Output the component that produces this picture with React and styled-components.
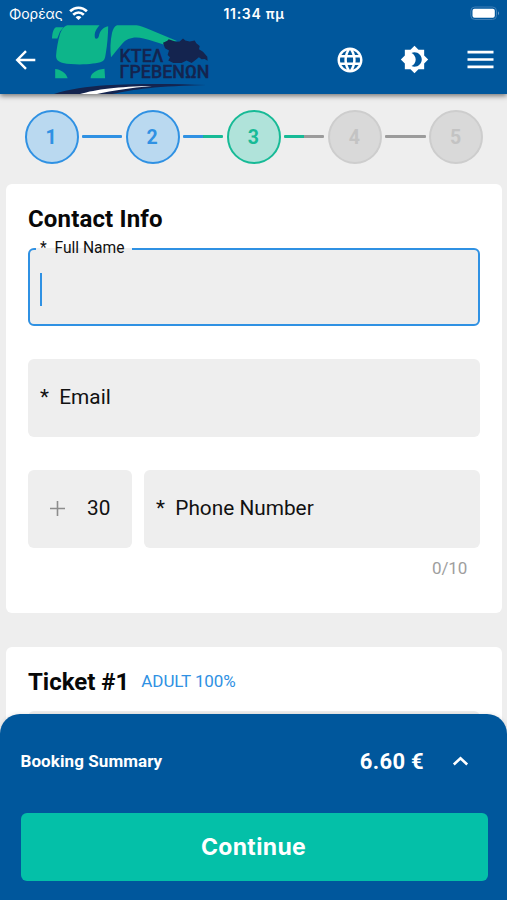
import React from 'react';
import styled, { createGlobalStyle } from 'styled-components';
import { MdLanguage, MdBrightness4 } from 'react-icons/md';

const GlobalStyle = createGlobalStyle`
  * { box-sizing: border-box; }
  body { margin: 0; background: #eeeeee; }
`;

const BLUE = '#00579c';
const ACCENT = '#2f91e3';
const GREEN = '#17ba96';

const Screen = styled.div`
  position: relative;
  display: flex;
  flex-direction: column;
  width: 507px;
  height: 900px;
  overflow: hidden;
  background: #eeeeee;
  color: #111;
  font-family: Roboto, sans-serif;
`;

const Header = styled.header`
  flex: none;
  height: 94px;
  background: ${BLUE};
  color: #fff;
  box-shadow: 0 2px 5px rgba(0, 0, 0, 0.5);
  z-index: 1;
`;

const StatusBar = styled.div`
  display: grid;
  grid-template-columns: 1fr auto 1fr;
  align-items: center;
  height: 25px;
  padding: 2px 7px 0 9px;
  font: 500 13.5px/20px Inter, 'Noto Sans', sans-serif;
`;

const Carrier = styled.div`
  display: flex;
  align-items: center;
  gap: 6px;
  font-weight: 400;
  font-size: 14px;
  letter-spacing: -0.05px;
`;

const Clock = styled.div`
  margin-right: 1px;
  font-weight: 600;
  font-size: 14px;
  letter-spacing: 0.7px;
`;

const BatterySlot = styled.div`
  display: flex;
  justify-content: flex-end;
`;

const NavBar = styled.nav`
  display: flex;
  align-items: flex-start;
  height: 69px;
  padding-left: 15px;
`;

const IconButton = styled.button`
  display: grid;
  place-items: center;
  width: ${(p) => p.$w}px;
  height: 69px;
  padding: 0;
  border: 0;
  background: none;
  color: #fff;
`;

const Logo = styled.svg`
  display: block;
  margin-left: 14px;
`;

const NavActions = styled.div`
  display: flex;
  margin-left: auto;
  padding-right: 11px;
  gap: 26px;
`;

const MenuSlot = styled.div`
  margin-left: 5px;
`;

const Steps = styled.div`
  display: flex;
  align-items: center;
  gap: 3.5px;
  flex: none;
  height: 90px;
  padding: 0 24px 5px 24.5px;
`;

const tones = {
  done: [ACCENT, '#bad9f0'],
  current: [GREEN, '#b0e3da'],
  idle: ['#cdcdcd', '#d9d9d9'],
};

const Step = styled.div`
  display: grid;
  place-items: center;
  flex: none;
  width: 54px;
  height: 54px;
  padding: 1px 1px 0 0;
  border: 2px solid ${(p) => tones[p.$tone][0]};
  border-radius: 50%;
  background: ${(p) => tones[p.$tone][1]};
  color: ${(p) => (p.$tone === 'idle' ? '#c3c3c3' : tones[p.$tone][0])};
  font-size: 19.5px;
  font-weight: 700;
`;

const Connector = styled.div`
  flex: 1;
  height: 2.6px;
  border-radius: 1px;
  background: linear-gradient(90deg, ${(p) => p.$from} 50%, ${(p) => p.$to} 50%);
`;

const Card = styled.section`
  flex: none;
  width: 496px;
  height: ${(p) => p.$h}px;
  margin: 0 0 34px 6px;
  padding: 20px 22px 0;
  border-radius: 6px;
  background: #fff;
`;

const Title = styled.h2`
  margin: 0;
  color: #080808;
  font-size: 24px;
  font-weight: 700;
  line-height: 30px;
  letter-spacing: ${(p) => p.$ls || 0}px;
`;

const ActiveField = styled.fieldset`
  height: 86px;
  margin: 6px 0 33px;
  padding: 0 0 0 9.5px;
  border: 2.5px solid ${ACCENT};
  border-radius: 6px;
  background: #eeeeee;
`;

const Legend = styled.legend`
  margin-left: -3.5px;
  padding: 0 7px 2px 4px;
  font-size: 15.6px;
  line-height: 16px;
  white-space: pre;
`;

const Caret = styled.div`
  width: 2.5px;
  height: 33px;
  margin-top: 14.5px;
  background: ${ACCENT};
`;

const Field = styled.div`
  display: flex;
  align-items: center;
  flex: ${(p) => (p.$w ? 'none' : 1)};
  width: ${(p) => (p.$w ? `${p.$w}px` : 'auto')};
  height: 78px;
  padding: 0 0 3px 12px;
  border-radius: 6px;
  background: #eeeeee;
  font-size: 20.8px;
  white-space: pre;
`;

const PhoneRow = styled.div`
  display: flex;
  gap: 12.5px;
  margin-top: 33px;
`;

const Prefix = styled.span`
  display: flex;
  margin: 2px 22px 0 10px;
`;

const Counter = styled.div`
  padding: 9px 13px 0 0;
  color: #9e9e9e;
  font-size: 17px;
  line-height: 22px;
  letter-spacing: -0.2px;
  text-align: right;
`;

const TicketHead = styled.div`
  display: flex;
  align-items: center;
  gap: 12px;
  margin-bottom: 14px;
`;

const Fare = styled.span`
  margin-top: -2px;
  color: ${ACCENT};
  font-size: 17px;
  letter-spacing: -0.1px;
`;

const Sheet = styled.footer`
  position: absolute;
  inset: 714px 0 0;
  padding: 27px 20px 0 20.5px;
  border-radius: 20px 20px 0 0;
  background: ${BLUE};
  box-shadow: 0 0 4px rgba(0, 0, 0, 0.12);
  color: #fff;
`;

const Summary = styled.div`
  display: flex;
  align-items: center;
  height: 40px;
  padding-right: 18px;
`;

const SummaryLabel = styled.span`
  font-size: 17px;
  font-weight: 700;
  letter-spacing: 0.08px;
`;

const Price = styled.span`
  margin: 1px 28px 0 auto;
  font-size: 22px;
  font-weight: 700;
  letter-spacing: 0.3px;
`;

const Continue = styled.button`
  display: block;
  width: 467px;
  height: 67.5px;
  margin-top: 32px;
  padding: 1px 1px 0 0;
  border: 0;
  border-radius: 6px;
  background: #04c0a8;
  color: #fff;
  font: 700 23px/1 Inter, sans-serif;
  letter-spacing: 0.35px;
`;

function WifiIcon() {
  return (
    <svg width="19" height="15" viewBox="0 0 19 15" fill="none" stroke="#fff" strokeWidth="2.7">
      <path d="M1.1 5.2C6 .6 13 .6 17.9 5.2" />
      <path d="M4.2 8.7C7.3 5.8 11.7 5.8 14.8 8.7" />
      <path d="M9.5 14 6.6 11.2C8.3 9.7 10.7 9.7 12.4 11.2Z" fill="#fff" stroke="none" />
    </svg>
  );
}

function BatteryIcon() {
  return (
    <svg width="30" height="15" viewBox="0 0 30 15">
      <rect x=".8" y="1" width="25.7" height="12.5" rx="4" fill="none" stroke="#3f7fb6" />
      <rect x="2.5" y="2.7" width="22.3" height="9.1" rx="2" fill="#fff" />
      <path d="M28 5.2q2 2 0 4z" fill="#6f9fc9" />
    </svg>
  );
}

function CompanyLogo() {
  return (
    <Logo width="162" height="69" viewBox="50 25 162 69">
      <g fill="#0db58a">
        <path d="M56 27.3h7.5l-3.5 4.2-2.7 7H52c.2-3 .7-9.5 4-11.2z" />
        <path d="M67.5 25.2h32c-2 2.500-4.700 6-4.800 9.300-.1 3 .4 4.300 1.500 4.200 1.500-.1 2.400-1 2.700-2.700.9-5 4-8.600 9.300-9.700-.2 9-.8 18-2.400 27-.7 4.500-1 7-3.800 8.300-4 1.900-13 2.800-22.300 2.800-6 0-12-.3-16.700-1.400-5-1.300-7.200-3.500-6.900-7.700.4-6 1.800-14 3.700-20.500 1.500-5 3.700-8.600 7.700-9.600z" />
        <path d="M117 25.200h19.500c3.500.3 8 2 13 4.200 9 3.800 18.500 7.600 27.500 11.600L163.500 44.500c-7.500-2.500-13-4.200-20-6-9-2.200-16.500-.5-21.500 5.500-4.500 5-7.500 9.500-11 13.200-1-8-.7-16 1-24.200 1-4 2.500-6.800 5-7.800z" />
        <path d="M55.200 68.900c5 .4 11 3.800 12.500 9.400H55.200z" />
        <path d="M104.500 68.800l.6 9.500H90.600c-.2-5 6-8.700 13.900-9.500z" />
      </g>
      <path
        fill="#14244f"
        d="M163 42.700l4.300-2 1.400-1.400 4.300 1.400 3.300 1 3.400-.1 3.300-3.200 2.300 2.200 4.400 1 5-1 1.600 2.700 3.400 2.700-.7 3.300 4 2.400 4.300 5 .3 4-3-1.700-3 .2-2.700-2-4 3.300-3.300 2.400-5-2.400-5 2.400h-8.300l-5-2.400 1.700-3.300-2.400-2.300 1.400-4.400-4-2.300z"
      />
      <g
        fill="#14244f"
        stroke="#14244f"
        strokeWidth=".3"
        fontFamily="Roboto, sans-serif"
        fontWeight="500"
        fontSize="17.5"
      >
        <text x="119.5" y="62" textLength="44" lengthAdjust="spacingAndGlyphs">ΚΤΕΛ</text>
        <text x="119.5" y="78" textLength="90" lengthAdjust="spacingAndGlyphs">ΓΡΕΒΕΝΩΝ</text>
      </g>
      <path fill="#14244f" d="M54 94c14-4.500 34-7.500 52-8.700 30-2 70-1.700 100-.3-22 .5-42 1.600-58 3.200-14 1.500-24 3.300-36 5.800z" />
      <path fill="#fff" d="M80 94c16-4.500 38-7.600 72-8-22 2-39 4.400-55 8z" />
    </Logo>
  );
}

export default function App() {
  return (
    <Screen>
      <GlobalStyle />
      <Header>
        <StatusBar>
          <Carrier>Φορέας <WifiIcon /></Carrier>
          <Clock>11:34 πμ</Clock>
          <BatterySlot><BatteryIcon /></BatterySlot>
        </StatusBar>
        <NavBar>
          <IconButton $w={21} aria-label="Back">
            <svg width="21" height="20" viewBox="0 0 21 20" fill="none" stroke="#fff" strokeWidth="2.4">
              <path d="M20.300 10H2.500M11 1.200 2.200 10l8.800 8.800" />
            </svg>
          </IconButton>
          <CompanyLogo />
          <NavActions>
            <IconButton $w={38} aria-label="Language"><MdLanguage size={30} /></IconButton>
            <IconButton $w={38} aria-label="Theme"><MdBrightness4 size={29} /></IconButton>
            <MenuSlot>
              <IconButton $w={32} aria-label="Menu">
                <svg width="27" height="19" viewBox="0 0 27 19" stroke="#fff" strokeWidth="2.7">
                  <path d="M.5 2.200h26M.5 9.500h26M.5 16.800h26" />
                </svg>
              </IconButton>
            </MenuSlot>
          </NavActions>
        </NavBar>
      </Header>

      <Steps>
        <Step $tone="done">1</Step>
        <Connector $from={ACCENT} $to={ACCENT} />
        <Step $tone="done">2</Step>
        <Connector $from={ACCENT} $to={GREEN} />
        <Step $tone="current">3</Step>
        <Connector $from={GREEN} $to="#9b9b9b" />
        <Step $tone="idle">4</Step>
        <Connector $from="#9b9b9b" $to="#9b9b9b" />
        <Step $tone="idle">5</Step>
      </Steps>

      <Card $h={429}>
        <Title $ls={0.15}>Contact Info</Title>
        <ActiveField>
          <Legend>*  Full Name</Legend>
          <Caret />
        </ActiveField>
        <Field>*  Email</Field>
        <PhoneRow>
          <Field $w={103.5}>
            <Prefix>
              <svg width="15" height="15" viewBox="0 0 15 15" stroke="#8c8c8c" strokeWidth="1.6">
                <path d="M7.500 0v15M0 7.500h15" />
              </svg>
            </Prefix>
            30
          </Field>
          <Field>*  Phone Number</Field>
        </PhoneRow>
        <Counter>0/10</Counter>
      </Card>

      <Card $h={160}>
        <TicketHead>
          <Title>Ticket #1</Title>
          <Fare>ADULT 100%</Fare>
        </TicketHead>
        <Field />
      </Card>

      <Sheet>
        <Summary>
          <SummaryLabel>Booking Summary</SummaryLabel>
          <Price>6.60 €</Price>
          <svg width="17" height="10" viewBox="0 0 17 10" fill="none" stroke="#fff" strokeWidth="2.6">
            <path d="M1.800 8.500l6.700-6.300 6.700 6.300" />
          </svg>
        </Summary>
        <Continue>Continue</Continue>
      </Sheet>
    </Screen>
  );
}
